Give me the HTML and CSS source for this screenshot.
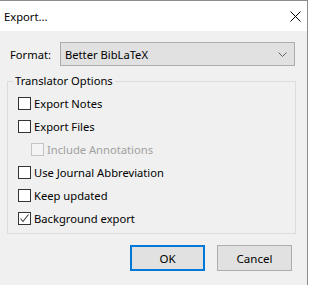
FILE: index.html
```html
<!DOCTYPE html>
<html lang="en">
<head>
    <meta charset="UTF-8">
    <title>Export...</title>
    <link rel="stylesheet" href="styles.css">
</head>
<body>
    <div class="dialog">
        <div class="titlebar">
            <span class="title">Export...</span>
            <span class="close">
                <svg width="11" height="11" viewBox="0 0 11 11"><path d="M0.5 0.5 L10.5 10.5 M10.5 0.5 L0.5 10.5" stroke="#000" stroke-width="1" fill="none"/></svg>
            </span>
        </div>

        <div class="content">
            <div class="format-row">
                <span class="label">Format:</span>
                <div class="select">
                    <span>Better BibLaTeX</span>
                    <svg width="9" height="5" viewBox="0 0 9 5"><path d="M0.5 0.5 L4.5 4.5 L8.5 0.5" stroke="#606060" fill="none"/></svg>
                </div>
            </div>

            <fieldset class="options">
                <legend>Translator Options</legend>
                <div class="option"><span class="box"></span>Export Notes</div>
                <div class="option"><span class="box"></span>Export Files</div>
                <div class="option sub disabled"><span class="box"></span>Include Annotations</div>
                <div class="option"><span class="box"></span>Use Journal Abbreviation</div>
                <div class="option"><span class="box"></span>Keep updated</div>
                <div class="option">
                    <span class="box"><svg width="11" height="11" viewBox="0 0 11 11"><path d="M1.5 5.5 L4 8.5 L9.5 1.5" stroke="#3c3c3c" stroke-width="1.1" fill="none"/></svg></span>Background export
                </div>
            </fieldset>

            <div class="buttons">
                <button class="btn default">OK</button>
                <button class="btn">Cancel</button>
            </div>
        </div>
    </div>
</body>
</html>
```

FILE: styles.css
```css
body {
    margin: 0;
    background: #fff;
    font-family: "Noto Sans", sans-serif;
    font-size: 11.2px;
    color: #000;
}

.dialog {
    width: 307px;
    height: 284px;
    background: #f0f0f0;
    border-top: 1px solid #8c8c8c;
    border-right: 1px solid #8c8c8c;
}

.titlebar {
    height: 30px;
    background: #fff;
    display: flex;
    align-items: center;
    justify-content: space-between;
    padding-left: 4px;
}

.close {
    width: 46px;
    height: 30px;
    display: flex;
    align-items: center;
    justify-content: center;
    margin-right: -11px;
}

.content {
    padding: 11px 0 0 0;
}

.format-row {
    display: flex;
    align-items: center;
    padding-left: 10px;
}

.label {
    width: 50px;
}

.select {
    width: 222px;
    height: 22px;
    border: 1px solid #adadad;
    background: #e1e1e1;
    display: flex;
    align-items: center;
    justify-content: space-between;
    padding: 0 7px 0 4px;
}

.options {
    margin: 7px 0 0 7px;
    width: 282px;
    border: 1px solid #dcdcdc;
    padding: 8px 0 8px 5px;
    display: flex;
    flex-direction: column;
    gap: 10px;
}

.options legend {
    padding: 0 2px;
    line-height: 16px;
}

.option {
    display: flex;
    align-items: center;
    height: 13px;
    padding-left: 5px;
}

.box {
    width: 11px;
    height: 11px;
    border: 1px solid #333;
    background: #fff;
    margin-right: 3px;
    display: flex;
    align-items: center;
    justify-content: center;
}

.option.sub {
    padding-left: 18px;
}

.disabled {
    color: #a0a0a0;
}

.disabled .box {
    border-color: #c4c4c4;
    background: #f4f4f4;
}

.buttons {
    display: flex;
    justify-content: flex-end;
    gap: 12px;
    margin-top: 11px;
    padding-right: 15px;
}

.btn {
    width: 75px;
    height: 26px;
    border: 1px solid #adadad;
    background: #e1e1e1;
    font-family: inherit;
    font-size: 11.5px;
    padding: 0;
}

.btn.default {
    border: 2px solid #0078d7;
}
```
